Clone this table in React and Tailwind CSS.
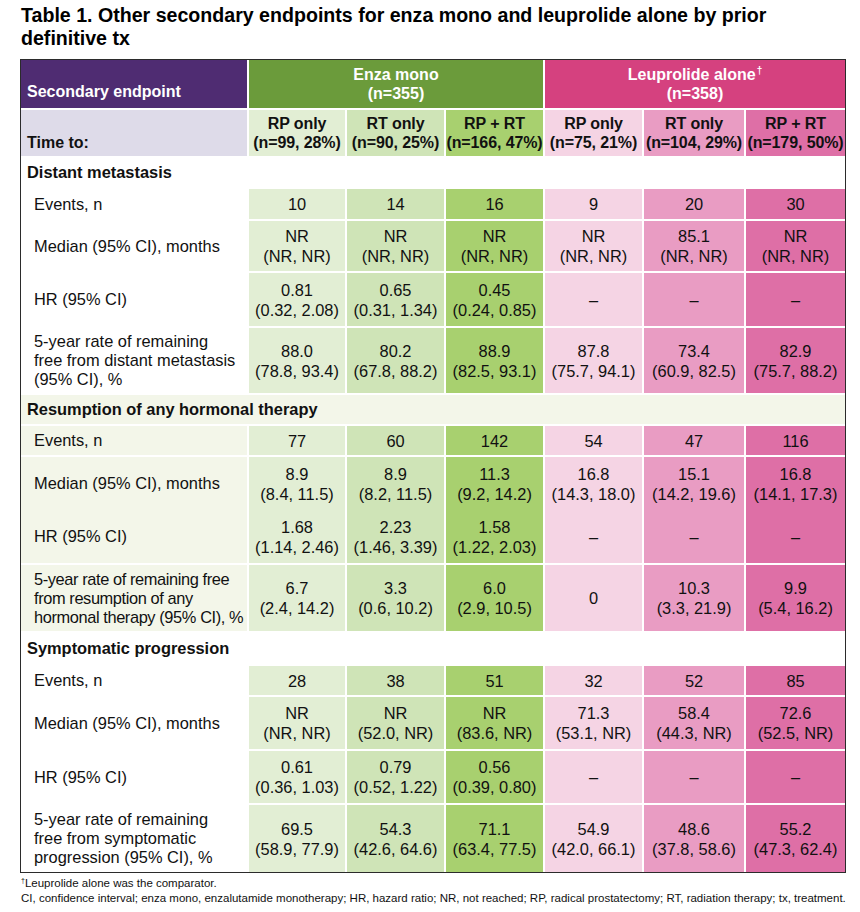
import React from 'react';

// column widths and fills, left to right after the label column
const colW = ['w-[98px]', 'w-[99px]', 'w-[99px]', 'w-[99px]', 'w-[102px]', 'w-[101px]'];
const colBg = ['bg-[#e2eed4]', 'bg-[#cfe4b7]', 'bg-[#a8d06f]', 'bg-[#f5d4e4]', 'bg-[#e99cc3]', 'bg-[#de6fa6]'];

const subHeads = [
  ['RP only', '(n=99, 28%)'],
  ['RT only', '(n=90, 25%)'],
  ['RP + RT', '(n=166, 47%)'],
  ['RP only', '(n=75, 21%)'],
  ['RT only', '(n=104, 29%)'],
  ['RP + RT', '(n=179, 50%)'],
];

const groups = [
  {
    title: 'Distant metastasis',
    cream: false,
    head: 'h-[31px]',
    rows: [
      { h: 'h-[32px]', label: ['Events, n'], vals: [['10'], ['14'], ['16'], ['9'], ['20'], ['30']] },
      { h: 'h-[52px]', label: ['Median (95% CI), months'], vals: [['NR', '(NR, NR)'], ['NR', '(NR, NR)'], ['NR', '(NR, NR)'], ['NR', '(NR, NR)'], ['85.1', '(NR, NR)'], ['NR', '(NR, NR)']] },
      { h: 'h-[55px]', label: ['HR (95% CI)'], vals: [['0.81', '(0.32, 2.08)'], ['0.65', '(0.31, 1.34)'], ['0.45', '(0.24, 0.85)'], ['–'], ['–'], ['–']] },
      { h: 'h-[67px]', label: ['5-year rate of remaining', 'free from distant metastasis', '(95% CI), %'], vals: [['88.0', '(78.8, 93.4)'], ['80.2', '(67.8, 88.2)'], ['88.9', '(82.5, 93.1)'], ['87.8', '(75.7, 94.1)'], ['73.4', '(60.9, 82.5)'], ['82.9', '(75.7, 88.2)']] },
    ],
  },
  {
    title: 'Resumption of any hormonal therapy',
    cream: true,
    head: 'h-[31px]',
    rows: [
      { h: 'h-[31px]', label: ['Events, n'], vals: [['77'], ['60'], ['142'], ['54'], ['47'], ['116']] },
      {
        h: 'h-[108px]',
        split: true,
        label: [['Median (95% CI), months'], ['HR (95% CI)']],
        vals: [
          [['8.9', '(8.4, 11.5)'], ['1.68', '(1.14, 2.46)']],
          [['8.9', '(8.2, 11.5)'], ['2.23', '(1.46, 3.39)']],
          [['11.3', '(9.2, 14.2)'], ['1.58', '(1.22, 2.03)']],
          [['16.8', '(14.3, 18.0)'], ['–']],
          [['15.1', '(14.2, 19.6)'], ['–']],
          [['16.8', '(14.1, 17.3)'], ['–']],
        ],
      },
      { h: 'h-[68px]', tight: true, label: ['5-year rate of remaining free', 'from resumption of any', 'hormonal therapy (95% CI), %'], vals: [['6.7', '(2.4, 14.2)'], ['3.3', '(0.6, 10.2)'], ['6.0', '(2.9, 10.5)'], ['0'], ['10.3', '(3.3, 21.9)'], ['9.9', '(5.4, 16.2)']] },
    ],
  },
  {
    title: 'Symptomatic progression',
    cream: false,
    head: 'h-[33px]',
    rows: [
      { h: 'h-[31px]', label: ['Events, n'], vals: [['28'], ['38'], ['51'], ['32'], ['52'], ['85']] },
      { h: 'h-[54px]', label: ['Median (95% CI), months'], vals: [['NR', '(NR, NR)'], ['NR', '(52.0, NR)'], ['NR', '(83.6, NR)'], ['71.3', '(53.1, NR)'], ['58.4', '(44.3, NR)'], ['72.6', '(52.5, NR)']] },
      { h: 'h-[54px]', label: ['HR (95% CI)'], vals: [['0.61', '(0.36, 1.03)'], ['0.79', '(0.52, 1.22)'], ['0.56', '(0.39, 0.80)'], ['–'], ['–'], ['–']] },
      { h: 'h-[69px]', label: ['5-year rate of remaining', 'free from symptomatic', 'progression (95% CI), %'], vals: [['69.5', '(58.9, 77.9)'], ['54.3', '(42.6, 64.6)'], ['71.1', '(63.4, 77.5)'], ['54.9', '(42.0, 66.1)'], ['48.6', '(37.8, 58.6)'], ['55.2', '(47.3, 62.4)']] },
    ],
  },
];

function Lines({ lines, className }) {
  return (
    <div className={className}>
      {lines.map((l, i) => (
        <div key={i} className="whitespace-nowrap">{l}</div>
      ))}
    </div>
  );
}

function DataRow({ row, cream }) {
  const labelBg = cream ? 'bg-[#f3f6e9]' : 'bg-white';
  if (row.split) {
    return (
      <div className={`flex border-t-2 border-white ${row.h}`}>
        <div className={`w-[226px] flex flex-col ${labelBg}`}>
          {row.label.map((l, i) => (
            <div key={i} className="flex-1 flex items-center pl-[13px] leading-[19px]">{l[0]}</div>
          ))}
        </div>
        {row.vals.map((v, i) => (
          <div key={i} className={`${colW[i]} ${colBg[i]} border-l-2 border-white flex flex-col`}>
            {v.map((part, j) => (
              <Lines key={j} lines={part} className="flex-1 flex flex-col items-center justify-center text-center leading-[20px]" />
            ))}
          </div>
        ))}
      </div>
    );
  }
  return (
    <div className={`flex border-t-2 border-white ${row.h}`}>
      <Lines
        lines={row.label}
        className={`w-[226px] flex flex-col justify-center pl-[13px] leading-[19px] ${labelBg} ${row.tight ? 'tracking-[-0.4px]' : ''}`}
      />
      {row.vals.map((v, i) => (
        <Lines
          key={i}
          lines={v}
          className={`${colW[i]} ${colBg[i]} border-l-2 border-white flex flex-col items-center justify-center text-center leading-[20px]`}
        />
      ))}
    </div>
  );
}

export default function App() {
  return (
    <div className="w-[860px] h-[912px] bg-white text-[#111] font-[family-name:'Liberation_Sans',Arial,sans-serif]">
      <div className="pl-[21px] pt-[4px] text-[19.6px] leading-[23px] font-bold text-black">
        Table 1. Other secondary endpoints for enza mono and leuprolide alone by prior
        <br />
        definitive tx
      </div>

      <div className="ml-[20px] mt-[9px] w-[826px] border border-[#2b2b2b] text-[16.4px]">
        {/* top header */}
        <div className="flex h-[48px] font-bold text-white text-[16px] leading-[19px]">
          <div className="w-[226px] bg-[#4f2c72] flex items-end pl-[6px] pb-[7px]">Secondary endpoint</div>
          <div className="w-[296px] bg-[#6b9b3b] border-l-2 border-white flex flex-col items-center justify-center">
            <div>Enza mono</div>
            <div>(n=355)</div>
          </div>
          <div className="w-[302px] bg-[#d5417f] border-l-2 border-white flex flex-col items-center justify-center">
            <div>
              Leuprolide alone<span className="text-[10px] leading-none relative top-[-6px] ml-[1px]">†</span>
            </div>
            <div>(n=358)</div>
          </div>
        </div>

        {/* sub header */}
        <div className="flex h-[48px] border-t-2 border-white font-bold text-[16px] leading-[19px] text-[#111]">
          <div className="w-[226px] bg-[#dedbe9] flex items-end pl-[6px] pb-[4px]">Time to:</div>
          {subHeads.map((s, i) => (
            <div key={i} className={`${colW[i]} ${colBg[i]} border-l-2 border-white flex flex-col items-center justify-center whitespace-nowrap tracking-[-0.1px]`}>
              <div>{s[0]}</div>
              <div>{s[1]}</div>
            </div>
          ))}
        </div>

        {groups.map((g) => (
          <div key={g.title}>
            <div className={`flex items-center pl-[6px] font-bold border-t-2 border-white ${g.head} ${g.cream ? 'bg-[#f3f6e9]' : 'bg-white'}`}>
              {g.title}
            </div>
            {g.rows.map((r, i) => (
              <DataRow key={i} row={r} cream={g.cream} />
            ))}
          </div>
        ))}
      </div>

      <div className="pl-[21px] pt-[3px] text-[11.5px] leading-[15px] text-[#111]">
        <div>
          <span className="text-[7px] leading-none relative top-[-4px]">†</span>Leuprolide alone was the comparator.
        </div>
        <div className="whitespace-nowrap">
          CI, confidence interval; enza mono, enzalutamide monotherapy; HR, hazard ratio; NR, not reached; RP, radical prostatectomy; RT, radiation therapy; tx, treatment.
        </div>
      </div>
    </div>
  );
}
